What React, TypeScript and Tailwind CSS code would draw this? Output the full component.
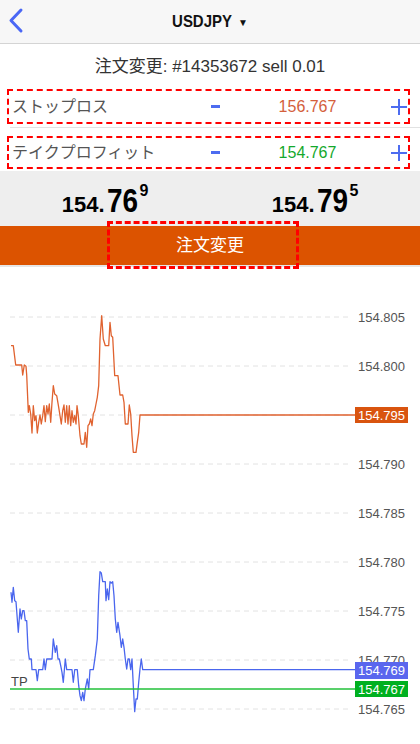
import React from "react";

// price series traced from the chart, [x, y] in 3x units
const ASK: number[][] = [
  [33, 170], [40, 170], [47, 228], [65, 228], [68, 258], [73, 228], [78, 232], [80, 258],
  [85, 370], [88, 350], [92, 375], [96, 432], [100, 350], [104, 395], [108, 380], [112, 432],
  [116, 400], [120, 378], [124, 405], [128, 380], [132, 350], [136, 398], [140, 350], [144, 375],
  [148, 345], [152, 400], [156, 340], [160, 290], [164, 315], [170, 320], [176, 355], [180, 380],
  [184, 405], [188, 365], [192, 348], [196, 400], [200, 350], [204, 405], [208, 350], [212, 410],
  [216, 365], [220, 400], [224, 380], [228, 405], [231, 350], [235, 380], [240, 440], [244, 465],
  [252, 465], [256, 430], [260, 475], [264, 410], [268, 405], [272, 390], [276, 410], [280, 375],
  [284, 365], [288, 345], [292, 325], [296, 290], [300, 150], [305, 80], [310, 150], [316, 170],
  [326, 170], [330, 100], [334, 140], [338, 145], [344, 260], [354, 260], [360, 318], [368, 318],
  [372, 340], [376, 405], [384, 405], [388, 348], [392, 375], [396, 440], [400, 490], [408, 490],
  [412, 460], [416, 430], [420, 378], [425, 378], [1065, 378],
];

const BID: number[][] = [
  [33, 340], [36, 370], [40, 325], [44, 365], [48, 368], [52, 420], [55, 460], [60, 390],
  [64, 420], [68, 395], [72, 395], [76, 425], [80, 425], [84, 510], [88, 540], [94, 540],
  [96, 572], [108, 572], [112, 605], [116, 572], [128, 572], [132, 540], [136, 572], [140, 540],
  [156, 540], [160, 480], [166, 520], [170, 500], [174, 540], [178, 540], [182, 560], [186, 580],
  [190, 610], [196, 540], [200, 572], [216, 572], [220, 610], [224, 572], [232, 572], [236, 620],
  [240, 650], [244, 665], [248, 640], [252, 665], [256, 630], [262, 600], [266, 630], [270, 572],
  [280, 572], [286, 530], [292, 480], [296, 350], [300, 278], [304, 282], [308, 308], [316, 308],
  [318, 365], [322, 330], [326, 362], [330, 308], [334, 312], [338, 308], [342, 350], [346, 420],
  [350, 460], [354, 430], [360, 470], [364, 505], [368, 480], [372, 505], [376, 540], [380, 570],
  [384, 540], [388, 540], [392, 572], [396, 540], [400, 620], [404, 698], [408, 660], [412, 660],
  [416, 610], [420, 570], [424, 540], [428, 572], [1065, 572],
];

const toPoints = (arr: number[][], offsetY: number) =>
  arr.map(([x, y]) => `${(x / 3).toFixed(1)},${(offsetY + y / 3).toFixed(1)}`).join(" ");

const LEVELS = ["154.805", "154.800", "154.795", "154.790", "154.785", "154.780", "154.775", "154.770", "154.765"];

const font = "font-['Liberation_Sans','Noto_Sans_CJK_JP',sans-serif]";

function Minus() {
  return <div className="w-[9px] h-[3px] bg-[#4d6cf0]" />;
}

function Plus() {
  return (
    <svg width="16" height="16" viewBox="0 0 16 16">
      <line x1="0" y1="8" x2="16" y2="8" stroke="#4d6cf0" strokeWidth="2" />
      <line x1="8" y1="0" x2="8" y2="16" stroke="#4d6cf0" strokeWidth="2" />
    </svg>
  );
}

function AdjustRow({ label, value, color, height }: { label: string; value: string; color: string; height: string }) {
  return (
    <div className={`ml-[7px] w-[403px] ${height} border-2 border-dashed border-[#ff0000] flex items-center`}>
      <div className="w-[197px] pl-[3px] text-[16px] text-[#555]">{label}</div>
      <div className="w-[19px] flex justify-center">
        <Minus />
      </div>
      <div className="flex-1 text-center text-[16px]" style={{ color }}>
        {value}
      </div>
      <div className="w-[18px] flex justify-center">
        <Plus />
      </div>
    </div>
  );
}

function Price({ head, big, tail }: { head: string; big: string; tail: string }) {
  return (
    <div className="flex justify-center">
      <div className="flex items-baseline font-bold text-black leading-none">
        <span className="text-[22px]">{head}</span>
        <span className="text-[34px] inline-block origin-left scale-x-[0.82] ml-[2px] mr-[-6px]">{big}</span>
        <span className="text-[16px] self-start ml-[1px]">{tail}</span>
      </div>
    </div>
  );
}

function Chart() {
  return (
    <svg width="420" height="476" viewBox="0 268 420 476" className="block">
      {LEVELS.map((lv, i) => {
        const y = 318 + i * 49;
        return (
          <g key={lv}>
            <line x1="10" y1={y} x2="352" y2={y} stroke="#e2e2e2" strokeWidth="1" strokeDasharray="5 4" />
            <text x="358" y={y + 5} fontSize="13" fill="#555" fontFamily="Liberation Sans, sans-serif">
              {lv}
            </text>
          </g>
        );
      })}

      <polyline points={toPoints(ASK, 290)} fill="none" stroke="#e0622f" strokeWidth="1.3" strokeLinejoin="round" />
      <polyline points={toPoints(BID, 480)} fill="none" stroke="#4a66ee" strokeWidth="1.3" strokeLinejoin="round" />

      <line x1="10" y1="690" x2="355" y2="690" stroke="#22c03a" strokeWidth="1.3" />
      <text x="11" y="687" fontSize="13" fill="#444" fontFamily="Liberation Sans, sans-serif">
        TP
      </text>

      <rect x="355" y="408" width="53" height="16" fill="#d9540f" />
      <text x="358" y="421" fontSize="13" fill="#fff" fontFamily="Liberation Sans, sans-serif">
        154.795
      </text>

      <rect x="355" y="663" width="53" height="17" fill="#5a66ee" />
      <text x="358" y="676" fontSize="13" fill="#fff" fontFamily="Liberation Sans, sans-serif">
        154.769
      </text>

      <rect x="355" y="682" width="53" height="16" fill="#00b020" />
      <text x="358" y="695" fontSize="13" fill="#fff" fontFamily="Liberation Sans, sans-serif">
        154.767
      </text>
    </svg>
  );
}

export default function App() {
  return (
    <div className={`w-[420px] h-[744px] overflow-hidden bg-white ${font}`}>
      <header className="h-[44px] bg-[#f7f7f7] border-b border-[#d4d4d4] flex items-center relative">
        <svg width="30" height="44" viewBox="0 0 30 44">
          <polyline points="21,10 11,20.5 21,31" fill="none" stroke="#4a67f5" strokeWidth="3" strokeLinecap="round" strokeLinejoin="round" />
        </svg>
        <div className="flex-1 flex justify-center items-center pr-[34px]">
          <span className="text-[17px] font-bold text-[#111] inline-block scale-x-[0.88] -mr-[4px]">USDJPY</span>
          <span className="text-[10px] text-[#111] ml-[6px] mt-[2px]">▼</span>
        </div>
      </header>

      <div className="h-[45px] flex items-center justify-center text-[17px] text-[#333]">
        注文変更: #14353672 sell 0.01
      </div>

      <AdjustRow label="ストップロス" value="156.767" color="#d4603c" height="h-[35px]" />
      <div className="h-[3px]" />
      <div className="h-px ml-[10px] bg-[#e2e2e2]" />
      <div className="h-[8px]" />
      <AdjustRow label="テイクプロフィット" value="154.767" color="#14a82c" height="h-[33px]" />
      <div className="h-[2px]" />

      <div className="h-[55px] bg-[#eeeeee] grid grid-cols-2 items-center pt-[3px]">
        <Price head="154." big="76" tail="9" />
        <Price head="154." big="79" tail="5" />
      </div>

      <div className="h-[39px] bg-[#dc5300] relative flex items-center justify-center">
        <span className="text-[17px] text-white">注文変更</span>
        <div className="absolute left-[107px] top-[-5px] w-[192px] h-[48px] border-[3px] border-dashed border-[#ff0000]" />
      </div>
      <div className="h-[2px] bg-[#e6e6e6]" />

      <Chart />
    </div>
  );
}
